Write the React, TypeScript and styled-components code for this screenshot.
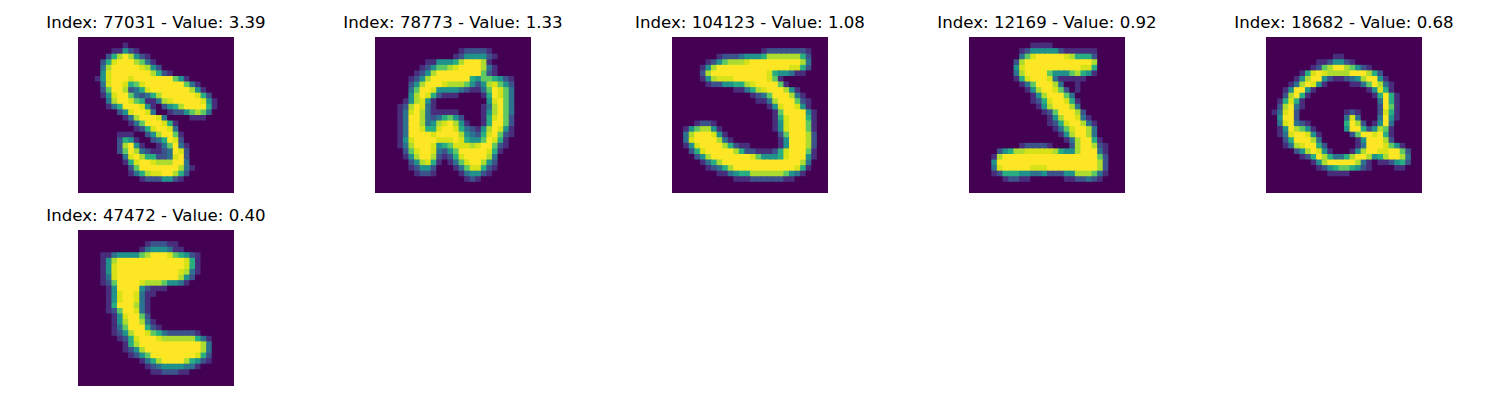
import styled, { createGlobalStyle } from 'styled-components'

const GlobalStyle = createGlobalStyle`
  html, body {
    margin: 0;
    background: #fff;
  }
`

const Figure = styled.main`
  display: grid;
  grid-template-columns: repeat(5, 297px);
  grid-auto-rows: 180px;
  row-gap: 13px;
  box-sizing: border-box;
  width: 1500px;
  height: 400px;
  padding: 13px 0 0 7.5px;
  overflow: hidden;
`

const Subplot = styled.figure`
  display: flex;
  flex-direction: column;
  align-items: center;
  gap: 4px;
  margin: 0;
`

const Title = styled.figcaption`
  height: 20px;
  color: #000;
  font-family: 'DejaVu Sans', sans-serif;
  font-size: 16.6px;
  line-height: 20px;
  white-space: nowrap;
`

// viridis, cut into ten steps
const LEVELS = ['#440154', '#472d7b', '#3b528b', '#2c728e', '#21918c', '#28ae80', '#5ec962', '#addc30', '#d8e219', '#fde725']

// one string per row, each run is "first column:levels"
const SAMPLES: { index: number; value: string; rows: string[] }[] = [
  {
    index: 77031,
    value: '3.39',
    rows: [
      '',
      '8:1',
      '6:11421',
      '5:25797421',
      '4:2589997631',
      '4:37999998742',
      '4:4899999997521',
      '3:14899989999999641',
      '4:389985689999999631',
      '4:2699723589999999741',
      '4:14899632357999999852',
      '5:37998651137899999841',
      '5:13599984102457999951',
      '7:24899830012246763',
      '8:137999830000111',
      '9:136999851',
      '10:12589983',
      '7:111002479961',
      '7:254100235982',
      '7:2794100136931',
      '7:2697321123982',
      '8:389755223892',
      '8:158998777993',
      '9:269999999731',
      '9:13578899752',
      '11:12224421',
      '',
      '',
    ],
  },
  {
    index: 78773,
    value: '1.33',
    rows: [
      '',
      '',
      '15:122221',
      '14:12444421',
      '9:114445799971',
      '8:1246678999 9731',
      '7:124799999999621',
      '6:1247999999954665421',
      '6:2479998777642478642',
      '6:3699844443211369863',
      '6:479852111 19:159863',
      '5:147841 20:48963',
      '4:1279831 19:137963',
      '4:13897311111 19:147963',
      '4:139973235642 19:158962',
      '4:1399734789741 19:159962',
      '4:139985589985321479841',
      '4:139999899997432589621',
      '4:148999988898544698 51',
      '4:13799984568887899621',
      '5:268998324699999851',
      '5:14799721258999973',
      '6:247851 13:136899742',
      '6:12442 14:13688521',
      '7:1221 15:134421',
      '16:121',
      '',
      '',
    ],
  },
  {
    index: 104123,
    value: '1.08',
    rows: [
      '',
      '',
      '16:122222221',
      '8:12223444577777752',
      '6:1246777899999999973',
      '5:14799999999999998852',
      '5:2799999999998544311',
      '5:147888999999861',
      '6:122445578999961',
      '11:113578999741',
      '14:1236999731',
      '15:1137999621',
      '17:14899841',
      '18:16999941',
      '18:15899951',
      '4:1221 18:14899961',
      '2:1467741 18:14899961',
      '2:37999841 19:2699972',
      '2:389999731 19:1499972',
      '2:148999975211 19:1499972',
      '3:2589999975221112589 9961',
      '4:2479999999864445899941',
      '5:13579999999999999973',
      '6:1235799999999999851',
      '8:1134557777776431',
      '11:11122222211',
      '',
      '',
    ],
  },
  {
    index: 12169,
    value: '0.92',
    rows: [
      '',
      '11:1111',
      '9:12444442111111',
      '9:36899999875552',
      '8:279999999999997',
      '8:489999999999885',
      '8:379999644467541',
      '8:1589998311111',
      '9:13699973 19:1',
      '10:14799862 19:1',
      '11:14799963',
      '11:125899851',
      '12:14799973',
      '13:12699972',
      '14:14799831',
      '14:125899731',
      '15:13689973',
      '16:1479973',
      '17:1379951',
      '9:122221 18:2799721',
      '5:24577888887544799931',
      '4:179999999999999999962',
      '4:4999999999999999999 72',
      '4:38999998889999999 9972',
      '4:125554433422244777631',
      '6:12211 17:1122321',
      '',
      '',
    ],
  },
  {
    index: 18682,
    value: '0.68',
    rows: [
      '',
      '',
      '',
      '12:11',
      '9:1124421',
      '8:12679976421',
      '6:158987777999752',
      '5:14799421123479941',
      '4:1379841 15:11369731',
      '3:149941 18:14851',
      '3:27951 19:15951',
      '2:15851 20:3951',
      '2:27931 20:2961',
      '1:13892 14:121 20:2851',
      '2:4992 14:383 20:3941',
      '2:389321 14:5972 19:1493',
      '2:1497641 14:499524761',
      '2:13899841 15:26998951',
      '3:2599973 16:1499972',
      '3:13789952 16:139998641',
      '5:2479841 15:14799889962',
      '6:12597533579974579973',
      '8:14799999731 20:112452',
      '9:1245665421 23:11',
      '11:1111',
      '',
      '',
      '',
    ],
  },
  {
    index: 47472,
    value: '0.40',
    rows: [
      '',
      '',
      '12:122211',
      '11:13444311',
      '4:113444467999865421',
      '4:147999999999999851',
      '4:148999999999999851',
      '4:148999999999998731',
      '4:13899999999999742',
      '4:1269999877764431',
      '5:14999942111',
      '5:148998311',
      '5:14899831',
      '5:15999731',
      '5:12699831',
      '6:1489962',
      '6:14799731',
      '6:136999521',
      '6:1247998653222221',
      '7:12589998777777531',
      '8:1579999999999973',
      '8:12479999999999 73',
      '9:124699999999852',
      '11:135799997 5421',
      '12:1234444331',
      '13:1122211',
      '',
      '',
    ],
  },
]

function parseRow(row: string) {
  const cells = new Array<number>(28).fill(0)
  // a run only starts with "column:", a space in the digits is just a gap in the source
  row.replace(/ (\d+:)/g, '|$1').split('|').forEach((run) => {
    if (!run) return
    const [start, digits] = run.split(':')
    digits.replace(/ /g, '').split('').forEach((digit, i) => {
      cells[Number(start) + i] = Number(digit)
    })
  })
  return cells
}

function DigitImage({ rows }: { rows: string[] }) {
  // cells overlap the next one a little, so the edges stay soft without seams
  return (
    <svg width={156} height={156} viewBox="0 0 28 28" style={{ display: 'block' }}>
      {rows.map((row, y) =>
        parseRow(row).map((level, x) => (
          <rect key={`${x}-${y}`} x={x} y={y} width={1.2} height={1.2} fill={LEVELS[level]} />
        ))
      )}
    </svg>
  )
}

export default function App() {
  return (
    <>
      <GlobalStyle />
      <Figure>
        {SAMPLES.map((sample) => (
          <Subplot key={sample.index}>
            <Title>
              Index: {sample.index} - Value: {sample.value}
            </Title>
            <DigitImage rows={sample.rows} />
          </Subplot>
        ))}
      </Figure>
    </>
  )
}
